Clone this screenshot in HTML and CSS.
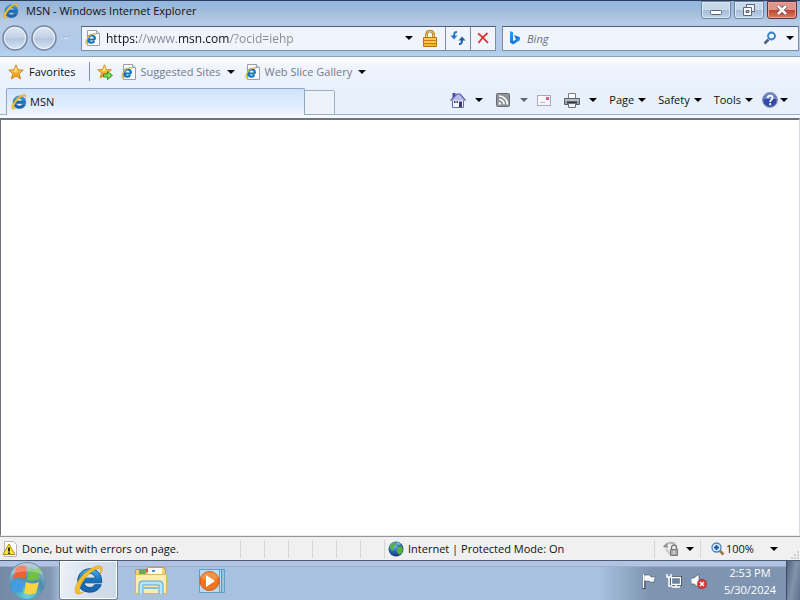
FILE: index.html
```html
<!DOCTYPE html>
<html lang="en">
<head>
<meta charset="utf-8">
<title>MSN - Windows Internet Explorer</title>
<link rel="stylesheet" href="styles.css">
</head>
<body>
<svg class="defs" aria-hidden="true">
  <defs>
    <linearGradient id="ieBlue" x1="0" y1="0" x2="0" y2="1">
      <stop offset="0" stop-color="#45b4e8"/><stop offset=".5" stop-color="#1371bc"/><stop offset="1" stop-color="#1b63ae"/>
    </linearGradient>
    <linearGradient id="glass" x1="0" y1="0" x2="0" y2="1">
      <stop offset="0" stop-color="#dfe8f4"/><stop offset=".48" stop-color="#c3d2e6"/><stop offset=".52" stop-color="#b4c6de"/><stop offset="1" stop-color="#d8e6f5"/>
    </linearGradient>
    <linearGradient id="gold" x1="0" y1="0" x2="0" y2="1">
      <stop offset="0" stop-color="#ffe25a"/><stop offset="1" stop-color="#f08c10"/>
    </linearGradient>
    <linearGradient id="bingBlue" x1="0" y1="0" x2="1" y2="1">
      <stop offset="0" stop-color="#2aa5f0"/><stop offset=".6" stop-color="#1b6fe0"/><stop offset="1" stop-color="#36cfe8"/>
    </linearGradient>
    <radialGradient id="globeFill" cx=".4" cy=".3" r=".75">
      <stop offset="0" stop-color="#7cc4ee"/><stop offset=".5" stop-color="#2566b8"/><stop offset="1" stop-color="#122f6c"/>
    </radialGradient>
    <radialGradient id="orb" cx=".5" cy=".9" r=".95">
      <stop offset="0" stop-color="#62d5e6"/><stop offset=".5" stop-color="#4b8cae"/><stop offset="1" stop-color="#b7c9d8"/>
    </radialGradient>
    <symbol id="ie" viewBox="0 0 32 32">
      <path d="M17 4C9 4 4 10 4 17s5 12 13 12c6 0 10-3 12-8h-7c-1 2-3 3-5 3-3 0-6-2-6-5h18.500C30 10 25 4 17 4zM11 14c0-3 3-5 6-5s5 2 6 5z" fill="url(#ieBlue)" stroke="#12518f" stroke-width="1"/>
      <path d="M28 10c3-5 3-8 0-9C22-.500 8 9 3 20c-3 6-2 11 1 11 2 0 4-1 6-2-3 1-5 0-4-4C8 17 18 6 25 4c3-.800 4 1 3 6z" fill="#f5bd2c" stroke="#cf9420" stroke-width=".5"/>
    </symbol>
    <symbol id="iePage" viewBox="0 0 16 16">
      <path d="M2.500.500h9l3 3v12h-12z" fill="#fdfdff" stroke="#97a0ae"/>
      <path d="M11.500.500v3h3" fill="#dce4ee" stroke="#97a0ae"/>
      <path d="M10 9.500H3.500a3 3 0 0 0 5.700 1.500M3.300 9C3.500 4 10 4 10 9.500" fill="none" stroke="#1673bd" stroke-width="2.200"/>
      <path d="M11 5C11 2 5 4 2 9c-2 4-1 6 1.500 4.500" fill="none" stroke="#e6b83b" stroke-width="1.200"/>
    </symbol>
    <symbol id="star" viewBox="0 0 16 16">
      <path d="M8 .8l2 5 5.300.3-4.100 3.500 1.400 5.300L8 12l-4.600 2.900 1.400-5.300L.7 6.100 6 5.800z" fill="url(#gold)" stroke="#c98519" stroke-width=".9" stroke-linejoin="round"/>
      <path d="M8 3l1.200 3.600L6 8z" fill="#fff3a0"/>
    </symbol>
    <symbol id="caret" viewBox="0 0 8 4"><path d="M0 0h8L4 4z"/></symbol>
  </defs>
</svg>

<div class="browser">
  <header class="titlebar">
    <svg class="icon16"><use href="#ie"/></svg>
    <h1 class="title">MSN - Windows Internet Explorer</h1>
    <div class="window-buttons">
      <button class="winbtn" aria-label="Minimize"><svg width="14" height="12" viewBox="0 0 14 12"><rect x="1.500" y="6.500" width="11" height="4" rx="1" fill="#fff" stroke="#59677e"/></svg></button>
      <button class="winbtn" aria-label="Restore"><svg width="14" height="12" viewBox="0 0 14 12"><path d="M4.500.500h8v7h-8z" fill="#eef3fa" stroke="#59677e"/><path d="M1.500 3.500h8v8h-8z" fill="#fff" stroke="#59677e"/><path d="M4 6.500h3v2H4z" fill="#9db2d1" stroke="#59677e"/></svg></button>
      <button class="winbtn winbtn-close" aria-label="Close"><svg width="12" height="10" viewBox="0 0 12 10"><path d="M2 1l8 8M10 1L2 9" stroke="#6c3944" stroke-width="4"/><path d="M2 1l8 8M10 1L2 9" stroke="#fff" stroke-width="2.500"/></svg></button>
    </div>
  </header>

  <nav class="navbar">
    <div class="history">
      <button class="plain" aria-label="Back"><svg width="26" height="26" viewBox="0 0 26 26"><circle cx="13" cy="13" r="12" fill="url(#glass)" stroke="#7686a0" stroke-width="1.500"/><circle cx="13" cy="13" r="10.500" fill="none" stroke="#edf4fc" stroke-width="1"/></svg></button>
      <button class="plain" aria-label="Forward"><svg width="26" height="26" viewBox="0 0 26 26"><circle cx="13" cy="13" r="12" fill="url(#glass)" stroke="#7686a0" stroke-width="1.500"/><circle cx="13" cy="13" r="10.500" fill="none" stroke="#edf4fc" stroke-width="1"/></svg></button>
      <button class="plain recent" aria-label="Recent pages"><svg width="7" height="4" viewBox="0 0 7 4"><path d="M0 1h7L5 3H2z" fill="#d7e4f4"/><path d="M0 1h7" stroke="#9eb4d1"/></svg></button>
    </div>
    <div class="address">
      <svg class="icon16"><use href="#iePage"/></svg>
      <input class="url" type="text" aria-label="Address" value="https://www.msn.com/?ocid=iehp">
      <button class="plain" aria-label="Show addresses"><svg class="caret"><use href="#caret"/></svg></button>
      <button class="plain lock" aria-label="Security report"><svg width="14" height="17" viewBox="0 0 14 17"><path d="M3.500 8V4.500a3.500 3.500 0 0 1 7 0V8" fill="none" stroke="#a9781c" stroke-width="2.600"/><path d="M3.500 8V4.500a3.500 3.500 0 0 1 7 0V8" fill="none" stroke="#f3cf66" stroke-width="1"/><path d="M.500 7.500h13v9H.500z" fill="#f4b32a" stroke="#b5770f"/><path d="M1 10.500h12M1 13.500h12" stroke="#c47f10"/><path d="M1 9h12M1 12h12" stroke="#ffdf72"/></svg></button>
      <button class="cell" aria-label="Refresh"><svg width="16" height="16" viewBox="0 0 16 16"><path d="M7 2C4.500 2 4 3 4 7" fill="none" stroke="#2b79c6" stroke-width="2"/><path d="M.500 5.500h7l-3.500 4z" fill="#2b79c6"/><path d="M9 14c2.500 0 3-1 3-5" fill="none" stroke="#245fa8" stroke-width="2"/><path d="M8.500 10.500h7l-3.500-4z" fill="#245fa8"/></svg></button>
      <button class="cell" aria-label="Stop"><svg width="12" height="12" viewBox="0 0 12 12"><path d="M1 1.500c3 2 6 5 10 9.500M10.500 1C7 4 4 7 1.500 11" fill="none" stroke="#d5382e" stroke-width="1.800"/></svg></button>
    </div>
    <div class="search">
      <svg width="12" height="16" viewBox="0 0 12 16"><path d="M1 1l3 1.200v9L7 9.500 5.500 6.300 5 5l6 2.200v3L4 14.500 1 12.500z" fill="url(#bingBlue)"/></svg>
      <input class="query" type="text" aria-label="Search" placeholder="Bing">
      <button class="plain" aria-label="Search the web"><svg width="14" height="14" viewBox="0 0 14 14"><path d="M5.500 8.500L1.500 12.500" stroke="#4a5d82" stroke-width="2.500"/><circle cx="8.500" cy="5" r="3.500" fill="#e8f6ff" stroke="#2f80c8" stroke-width="1.800"/></svg></button>
      <button class="plain" aria-label="Search options"><svg class="caret"><use href="#caret"/></svg></button>
    </div>
  </nav>

  <div class="favorites">
    <button class="plain"><svg class="icon16"><use href="#star"/></svg>Favorites</button>
    <span class="rule"></span>
    <button class="plain" aria-label="Add to Favorites bar"><svg class="icon16" viewBox="0 0 16 16"><use href="#star" width="15" height="15"/><path d="M6.500 10h4V7.500L15.500 11.500l-5 4V13h-4z" fill="#7fdc55" stroke="#2f8f25"/></svg></button>
    <a class="favlink" href="#"><svg class="icon16"><use href="#iePage"/></svg>Suggested Sites<svg class="caret"><use href="#caret"/></svg></a>
    <a class="favlink" href="#"><svg class="icon16"><use href="#iePage"/></svg>Web Slice Gallery<svg class="caret"><use href="#caret"/></svg></a>
  </div>

  <div class="tabrow">
    <button class="tab"><svg class="icon16"><use href="#ie"/></svg>MSN</button>
    <button class="newtab" aria-label="New Tab"></button>
    <div class="commands">
      <button class="plain split" aria-label="Home"><svg class="icon16" viewBox="0 0 16 16"><path d="M2.500 1h3v5h-3z" fill="#4a48b4"/><path d="M2.500 8v7.500h11V8L8 3z" fill="#f3f4ff" stroke="#6468ac"/><path d="M.500 8.500L7 2h3l5.500 6.500" fill="#b6bbea" stroke="#5b5faa" stroke-width="1.200"/><path d="M9 9.500h3V15H9z" fill="#36377a"/><path d="M4 9h1.500v2H4zM6.500 9H8v2H6.500z" fill="#44476f"/></svg><svg class="caret"><use href="#caret"/></svg></button>
      <button class="plain split feeds" aria-label="Feeds"><svg class="icon16" viewBox="0 0 16 16"><rect x="1.500" y="1.500" width="13" height="13" rx="1" fill="#90949a" stroke="#686c73"/><circle cx="4.800" cy="11.500" r="1.300" fill="#fff"/><path d="M4 7.300a5 5 0 0 1 5 5M4 4a8.500 8.500 0 0 1 8.500 8.500" fill="none" stroke="#fff" stroke-width="1.700"/></svg><svg class="caret"><use href="#caret"/></svg></button>
      <button class="plain mail" aria-label="Read mail"><svg class="icon16" viewBox="0 0 16 16"><rect x="1.500" y="3.500" width="13" height="10" fill="#f8f6fa" stroke="#a8a7b9"/><path d="M10 5h3v3h-3z" fill="#d9597c"/><path d="M4 10.500h5" stroke="#b9bac8"/></svg></button>
      <button class="plain split" aria-label="Print"><svg class="icon16" viewBox="0 0 16 16"><path d="M4.500 1.500h7V7h-7z" fill="#fff" stroke="#777e89"/><path d="M.500 6.500h15v6H.500z" fill="#9aa0aa" stroke="#5d636e"/><path d="M1 8h14" stroke="#d3d7de"/><path d="M3 10.500h10" stroke="#31353e" stroke-width="2"/><path d="M4.500 11.500h7v4h-7z" fill="#eef0f4" stroke="#6d737e"/></svg><svg class="caret"><use href="#caret"/></svg></button>
      <button class="plain menu">Page<svg class="caret"><use href="#caret"/></svg></button>
      <button class="plain menu">Safety<svg class="caret"><use href="#caret"/></svg></button>
      <button class="plain menu">Tools<svg class="caret"><use href="#caret"/></svg></button>
      <button class="plain menu help" aria-label="Help"><svg class="icon16" viewBox="0 0 16 16"><circle cx="8" cy="8" r="7.300" fill="#304ba6" stroke="#8390b9" stroke-width="1.200"/><path d="M2 7a6 6 0 0 1 12 0z" fill="#6f87cf"/><path d="M5.800 6c0-3.200 4.700-2.900 4.700-.2C10.500 7.700 8.200 7.500 8.200 10" fill="none" stroke="#fff" stroke-width="1.800"/><circle cx="8.200" cy="12.200" r="1.100" fill="#fff"/></svg><svg class="caret"><use href="#caret"/></svg></button>
    </div>
  </div>

  <main class="page"></main>

  <footer class="status">
    <div class="status-text"><svg class="icon16" viewBox="0 0 16 16"><path d="M2.500.500h9l3 3v12h-12z" fill="#fff" stroke="#b6b6ba"/><path d="M7 3L13 13.500H1z" fill="#ffe62b" stroke="#a88e12" stroke-linejoin="round"/><path d="M7 6.500v4M7 11.500V13" stroke="#111" stroke-width="1.700"/></svg>Done, but with errors on page.</div>
    <div class="slots"><span></span><span></span><span></span><span></span><span></span><span></span></div>
    <div class="zone"><svg class="icon16" viewBox="0 0 16 16"><circle cx="8" cy="8" r="7.500" fill="url(#globeFill)"/><path d="M2 4c2-3 5-3 6-2L7 5 5 6l1 2-2 2-2-3zM9 7l4-2 2 3-1 4-3 2-2-3z" fill="#56b13d"/><path d="M9 1l4 2-2 1-2-1z" fill="#8fd266"/></svg>Internet | Protected Mode: On</div>
    <button class="plain protect" aria-label="InPrivate filtering"><svg class="icon16" viewBox="0 0 16 16"><path d="M1 6c3-5 8-5 11-3" fill="none" stroke="#b4b4b4" stroke-width="2"/><path d="M0 6l4-4 1 5z" fill="#929292"/><path d="M3 8l4 5" stroke="#c3c3c3" stroke-width="2"/><path d="M8.500 9V6.500a2.500 2.500 0 0 1 5 0V9" fill="none" stroke="#777" stroke-width="1.400"/><path d="M7.500 8.500h7v6h-7z" fill="#aaa" stroke="#777"/><path d="M11 10v3" stroke="#eee"/></svg><svg class="caret"><use href="#caret"/></svg></button>
    <button class="plain zoom"><svg width="14" height="14" viewBox="0 0 14 14"><path d="M8 8l4.500 4.500" stroke="#96784c" stroke-width="2.500"/><circle cx="5.500" cy="5.500" r="4.500" fill="#d9efff" stroke="#5182b8" stroke-width="1.300"/><path d="M3 5.500h5M5.500 3v5" stroke="#1854a8" stroke-width="1.800"/></svg><span>100%</span><svg class="caret"><use href="#caret"/></svg></button>
    <svg class="grip" viewBox="0 0 10 10"><path d="M7 1h2v2H7zM7 4h2v2H7zM7 7h2v2H7zM4 4h2v2H4zM4 7h2v2H4zM1 7h2v2H1z" fill="#cfcfcf"/></svg>
  </footer>
</div>

<div class="taskbar">
  <button class="plain start" aria-label="Start">
    <svg width="40" height="38" viewBox="0 0 40 38"><circle cx="20" cy="19" r="18.500" fill="url(#orb)" stroke="#6f8fa6"/><path d="M9 6c4-3 7-3 11-1l-2 12c-4-2-8-2-12 0z" fill="#ee6138"/><path d="M22 6c4 2 8 2 12-1l-2 12c-4 2-8 2-12 1z" fill="#6fc04a"/><path d="M5 19c5-2 8-2 12 0l-2 12c-4-2-7-2-11 0z" fill="#3f9fe2"/><path d="M19 20c4 2 8 2 13 0l-3 11c-4 2-8 2-12 0z" fill="#fbd541"/><path d="M4 13C9-3 31-3 36 13 26 8 14 8 4 13z" fill="#fff" opacity=".25"/></svg>
  </button>
  <button class="task active" aria-label="Internet Explorer"><svg width="30" height="30"><use href="#ie"/></svg></button>
  <button class="task" aria-label="Windows Explorer"><svg width="34" height="30" viewBox="0 0 34 30"><path d="M1.500 3.500h11l2-2h16l1 3v23h-30z" fill="#efd277" stroke="#bd9f50"/><path d="M5 3h7v5H5z" fill="#6bab55"/><path d="M14 2h14v6H14z" fill="#fffbea"/><path d="M12 3h2v3h-2z" fill="#e44f3d"/><path d="M18 4h3v2h-3z" fill="#4e95cb"/><path d="M1.500 8.500h31v19h-31z" fill="#fbedaa" stroke="#d7b963"/><path d="M7 28v-9q0-2 2-2h16q2 0 2 2v9" fill="none" stroke="#5ba4cf" stroke-width="5"/><path d="M7 28v-9q0-2 2-2h16q2 0 2 2v9" fill="none" stroke="#b9e4f7" stroke-width="3"/><path d="M10 22h14" stroke="#83bede" stroke-width="2"/></svg></button>
  <button class="task" aria-label="Windows Media Player"><svg width="28" height="26" viewBox="0 0 28 26"><path d="M5.500 1.500h21v23h-21z" fill="#8fc6e7" stroke="#5ca0cc"/><path d="M3.500 1.500h20v23h-20z" fill="#b4dcf2" stroke="#4e99c8"/><path d="M1.500 1.500h20v23h-20z" fill="#bbdcf0" stroke="#5aa0cb"/><circle cx="11.500" cy="13" r="9.500" fill="#ee7622" stroke="#d25912"/><path d="M3 10a9 9 0 0 1 17 0q-8 5-17 0z" fill="#f8a55c" opacity=".6"/><path d="M8 7l9 6-9 6z" fill="#fff"/></svg></button>
  <div class="tray">
    <svg class="icon16" viewBox="0 0 16 16"><path d="M3 1v15" stroke="#36475c" stroke-width="3"/><path d="M3 2h6l1 2h5l-2 3 1 2H9L8 8H3z" fill="#fff" stroke="#435469" stroke-width=".6"/><path d="M2.500 1v14" stroke="#fff" stroke-width="1.500"/></svg>
    <svg class="icon16" viewBox="0 0 16 16"><path d="M5.500 4.500h9v7h-9z" fill="#536b84" stroke="#344355" stroke-width="3"/><path d="M5.500 4.500h9v7h-9z" fill="#69839d" stroke="#fff" stroke-width="1.300"/><path d="M6 14h8M10 12v2" stroke="#fff" stroke-width="1.500"/><path d="M1 1v3h4V1M3 4v9h3" fill="none" stroke="#fff" stroke-width="1.500"/></svg>
    <svg class="icon16" viewBox="0 0 16 16"><path d="M0 5h3l5-4v14l-5-4H0z" fill="#fff" stroke="#536378" stroke-width=".8"/><circle cx="11" cy="11" r="4.700" fill="#d93837" stroke="#b02227" stroke-width=".6"/><path d="M9 9l4 4M13 9l-4 4" stroke="#fff" stroke-width="1.600"/></svg>
  </div>
  <div class="clock"><time>2:53 PM</time><time>5/30/2024</time></div>
  <button class="show-desktop" aria-label="Show desktop"></button>
</div>
</body>
</html>
```
FILE: styles.css
```css
* { box-sizing: border-box; }

html { height: 100%; }

body {
  margin: 0;
  height: 100%;
  display: flex;
  flex-direction: column;
  font: 11px/16px "Open Sans", "Noto Sans", sans-serif;
  color: #111;
  overflow: hidden;
}

button, input {
  font: inherit;
  color: inherit;
  margin: 0;
  padding: 0;
  border: 0;
  background: none;
  outline: 0;
}

svg { display: block; flex: none; }
.defs { position: absolute; width: 0; height: 0; }
.icon16 { width: 16px; height: 16px; }
.caret { width: 8px; height: 4px; }

.plain { display: flex; align-items: center; }

.browser {
  flex: 1;
  min-height: 0;
  display: flex;
  flex-direction: column;
  background: #b9d0ea;
}

/* Title bar */
.titlebar {
  height: 22px;
  display: flex;
  align-items: center;
  gap: 7px;
  padding: 0 3px 2px;
  border-top: 1px solid #303d58;
  background: linear-gradient(#91b7e1, #a2bcda 50%, #b5cbe6);
}
.title { flex: 1; margin: 0; font-size: 11px; font-weight: 400; }
.window-buttons { display: flex; gap: 3px; align-self: flex-start; }
.winbtn {
  width: 30px;
  height: 18px;
  display: flex;
  align-items: center;
  justify-content: center;
  border: 1px solid #6d83a3;
  border-radius: 0 0 3px 3px;
  box-shadow: inset 0 0 0 1px #dce8f6;
  background: linear-gradient(#c8d8ec 48%, #a5bbd8 52%, #bfd3ec);
}
.winbtn-close {
  border-color: #63303d;
  box-shadow: inset 0 0 0 1px #e8a79b;
  background: linear-gradient(#dc9588 48%, #c04630 52%, #d97c62);
}

/* Navigation bar */
.navbar {
  height: 35px;
  display: flex;
  align-items: center;
  gap: 6px;
  padding: 0 1px 2px 2px;
  border-bottom: 1px solid #8e9fb4;
  background: linear-gradient(#b5cbe6, #b2cae8 80%, #b3d4f0);
}
.history { display: flex; gap: 3px; width: 73px; }
.recent { padding-left: 3px; }
.address, .search {
  height: 25px;
  display: flex;
  align-items: center;
  border: 1px solid #7c8da5;
  border-top-color: #4f6179;
  background: #f0f4fd;
}
.address { flex: 410; padding-left: 3px; }
.search { flex: 285; padding: 0 4px 0 6px; gap: 6px; }
.url, .query { flex: 1; min-width: 0; height: 20px; }
.url {
  margin-left: 5px;
  font-size: 12px;
  color: transparent;
  background: linear-gradient(90deg, #111 31px, #858a92 31px 73px, #111 73px 124px, #858a92 124px);
  -webkit-background-clip: text;
  background-clip: text;
}
.query::placeholder { color: #666d78; font-style: italic; opacity: 1; }
.search .plain + .plain { padding-left: 3px; }
.lock { width: 32px; padding-left: 10px; }
.cell {
  width: 25px;
  align-self: stretch;
  display: flex;
  align-items: center;
  justify-content: center;
  border-left: 1px solid #7c8da5;
}

/* Favorites bar */
.favorites {
  height: 31px;
  display: flex;
  align-items: center;
  padding: 0 0 2px 8px;
  background: linear-gradient(#fff, #f0f5fd 30%, #e8f0fb);
}
.favorites .plain { gap: 5px; }
.rule { width: 1px; height: 19px; margin: 0 7px 0 13px; background: #8490a3; }
.favlink {
  display: flex;
  align-items: center;
  gap: 4px;
  margin-left: 8px;
  color: #737b88;
  text-decoration: none;
}
.favlink .caret { margin-left: 2px; fill: #111; }
.favlink + .favlink { margin-left: 10px; }

/* Tabs and command bar */
.tabrow {
  height: 30px;
  display: flex;
  align-items: flex-start;
  padding-left: 6px;
  background: linear-gradient(#e8f0fb 26px, #a0b1c7 26px 27px, #f6f9fe 27px);
}
.tab {
  flex: 0 1 299px;
  height: 27px;
  display: flex;
  align-items: center;
  gap: 3px;
  padding-left: 4px;
  border: 1px solid #8fa7c5;
  border-bottom: 0;
  border-radius: 2px 2px 0 0;
  background: linear-gradient(#cfe4fc, #dcebfe 50%, #eff6ff);
}
.newtab {
  width: 30px;
  height: 25px;
  margin-top: 2px;
  border: 1px solid #9cadc2;
  border-left: 0;
  border-radius: 0 2px 2px 0;
  background: #edf3fb;
}
.commands {
  flex: 1;
  display: flex;
  align-items: center;
  justify-content: flex-end;
  height: 24px;
  gap: 12px;
  padding-right: 12px;
}
.split { gap: 9px; }
.menu { gap: 4px; }
.feeds .caret { fill: #5f6775; }
.mail { margin-left: -4px; }
.help { gap: 2px; margin-left: -3px; }

/* Document area */
.page {
  flex: 1;
  min-height: 0;
  border: 1px solid #6d747d;
  border-top-width: 2px;
  border-right-color: #d7dce4;
  border-bottom-color: #ededed;
  background: #fff;
}

/* Status bar */
.status {
  height: 24px;
  display: flex;
  align-items: center;
  border-top: 1px solid #969696;
  background: #f0f0f0;
}
.status-text { flex: 1; display: flex; align-items: center; gap: 4px; padding-left: 2px; }
.slots { display: flex; }
.slots span { width: 24px; height: 18px; border-left: 1px solid #d5d5d5; }
.zone {
  width: 270px;
  height: 18px;
  display: flex;
  align-items: center;
  gap: 4px;
  padding-left: 3px;
  border-left: 1px solid #d5d5d5;
}
.protect {
  width: 46px;
  height: 18px;
  gap: 7px;
  padding-left: 8px;
  border-left: 1px solid #d5d5d5;
}
.zoom {
  width: 90px;
  height: 18px;
  gap: 1px;
  padding: 0 12px 0 10px;
  border-left: 1px solid #d5d5d5;
}
.zoom .caret { margin-left: auto; }
.grip { width: 10px; height: 10px; align-self: flex-end; }

/* Taskbar */
.taskbar {
  height: 40px;
  flex: none;
  display: flex;
  align-items: stretch;
  border-top: 1px solid #4c5b70;
  background:
    linear-gradient(#b2c3e6 5px, #9eafc5 5px 6px, transparent 6px),
    linear-gradient(90deg, #7389a5 0, #8297b2 50px, #a8c1de 62px, #a8c1de calc(100% - 200px), #7e94b0 calc(100% - 150px));
}
.start { width: 59px; padding-left: 7px; }
.task {
  width: 59px;
  margin-right: 2px;
  display: flex;
  align-items: center;
  justify-content: center;
}
.task.active {
  margin-right: 3px;
  border: 1px solid #718198;
  border-top: 0;
  border-radius: 0 0 3px 3px;
  box-shadow: inset 0 0 0 1px #fff;
  background: linear-gradient(100deg, #edf2f8, #d5deea 60%, #c9d8e8);
}
.tray { display: flex; align-items: center; gap: 9px; margin-left: auto; }
.clock {
  width: 72px;
  margin-left: 7px;
  display: flex;
  flex-direction: column;
  justify-content: center;
  text-align: center;
  color: #fff;
  line-height: 17px;
}
.show-desktop {
  width: 14px;
  border-left: 1px solid #3c4c62;
  background: linear-gradient(100deg, #52657f, #8194ab 50%, #5d718c);
}
```
